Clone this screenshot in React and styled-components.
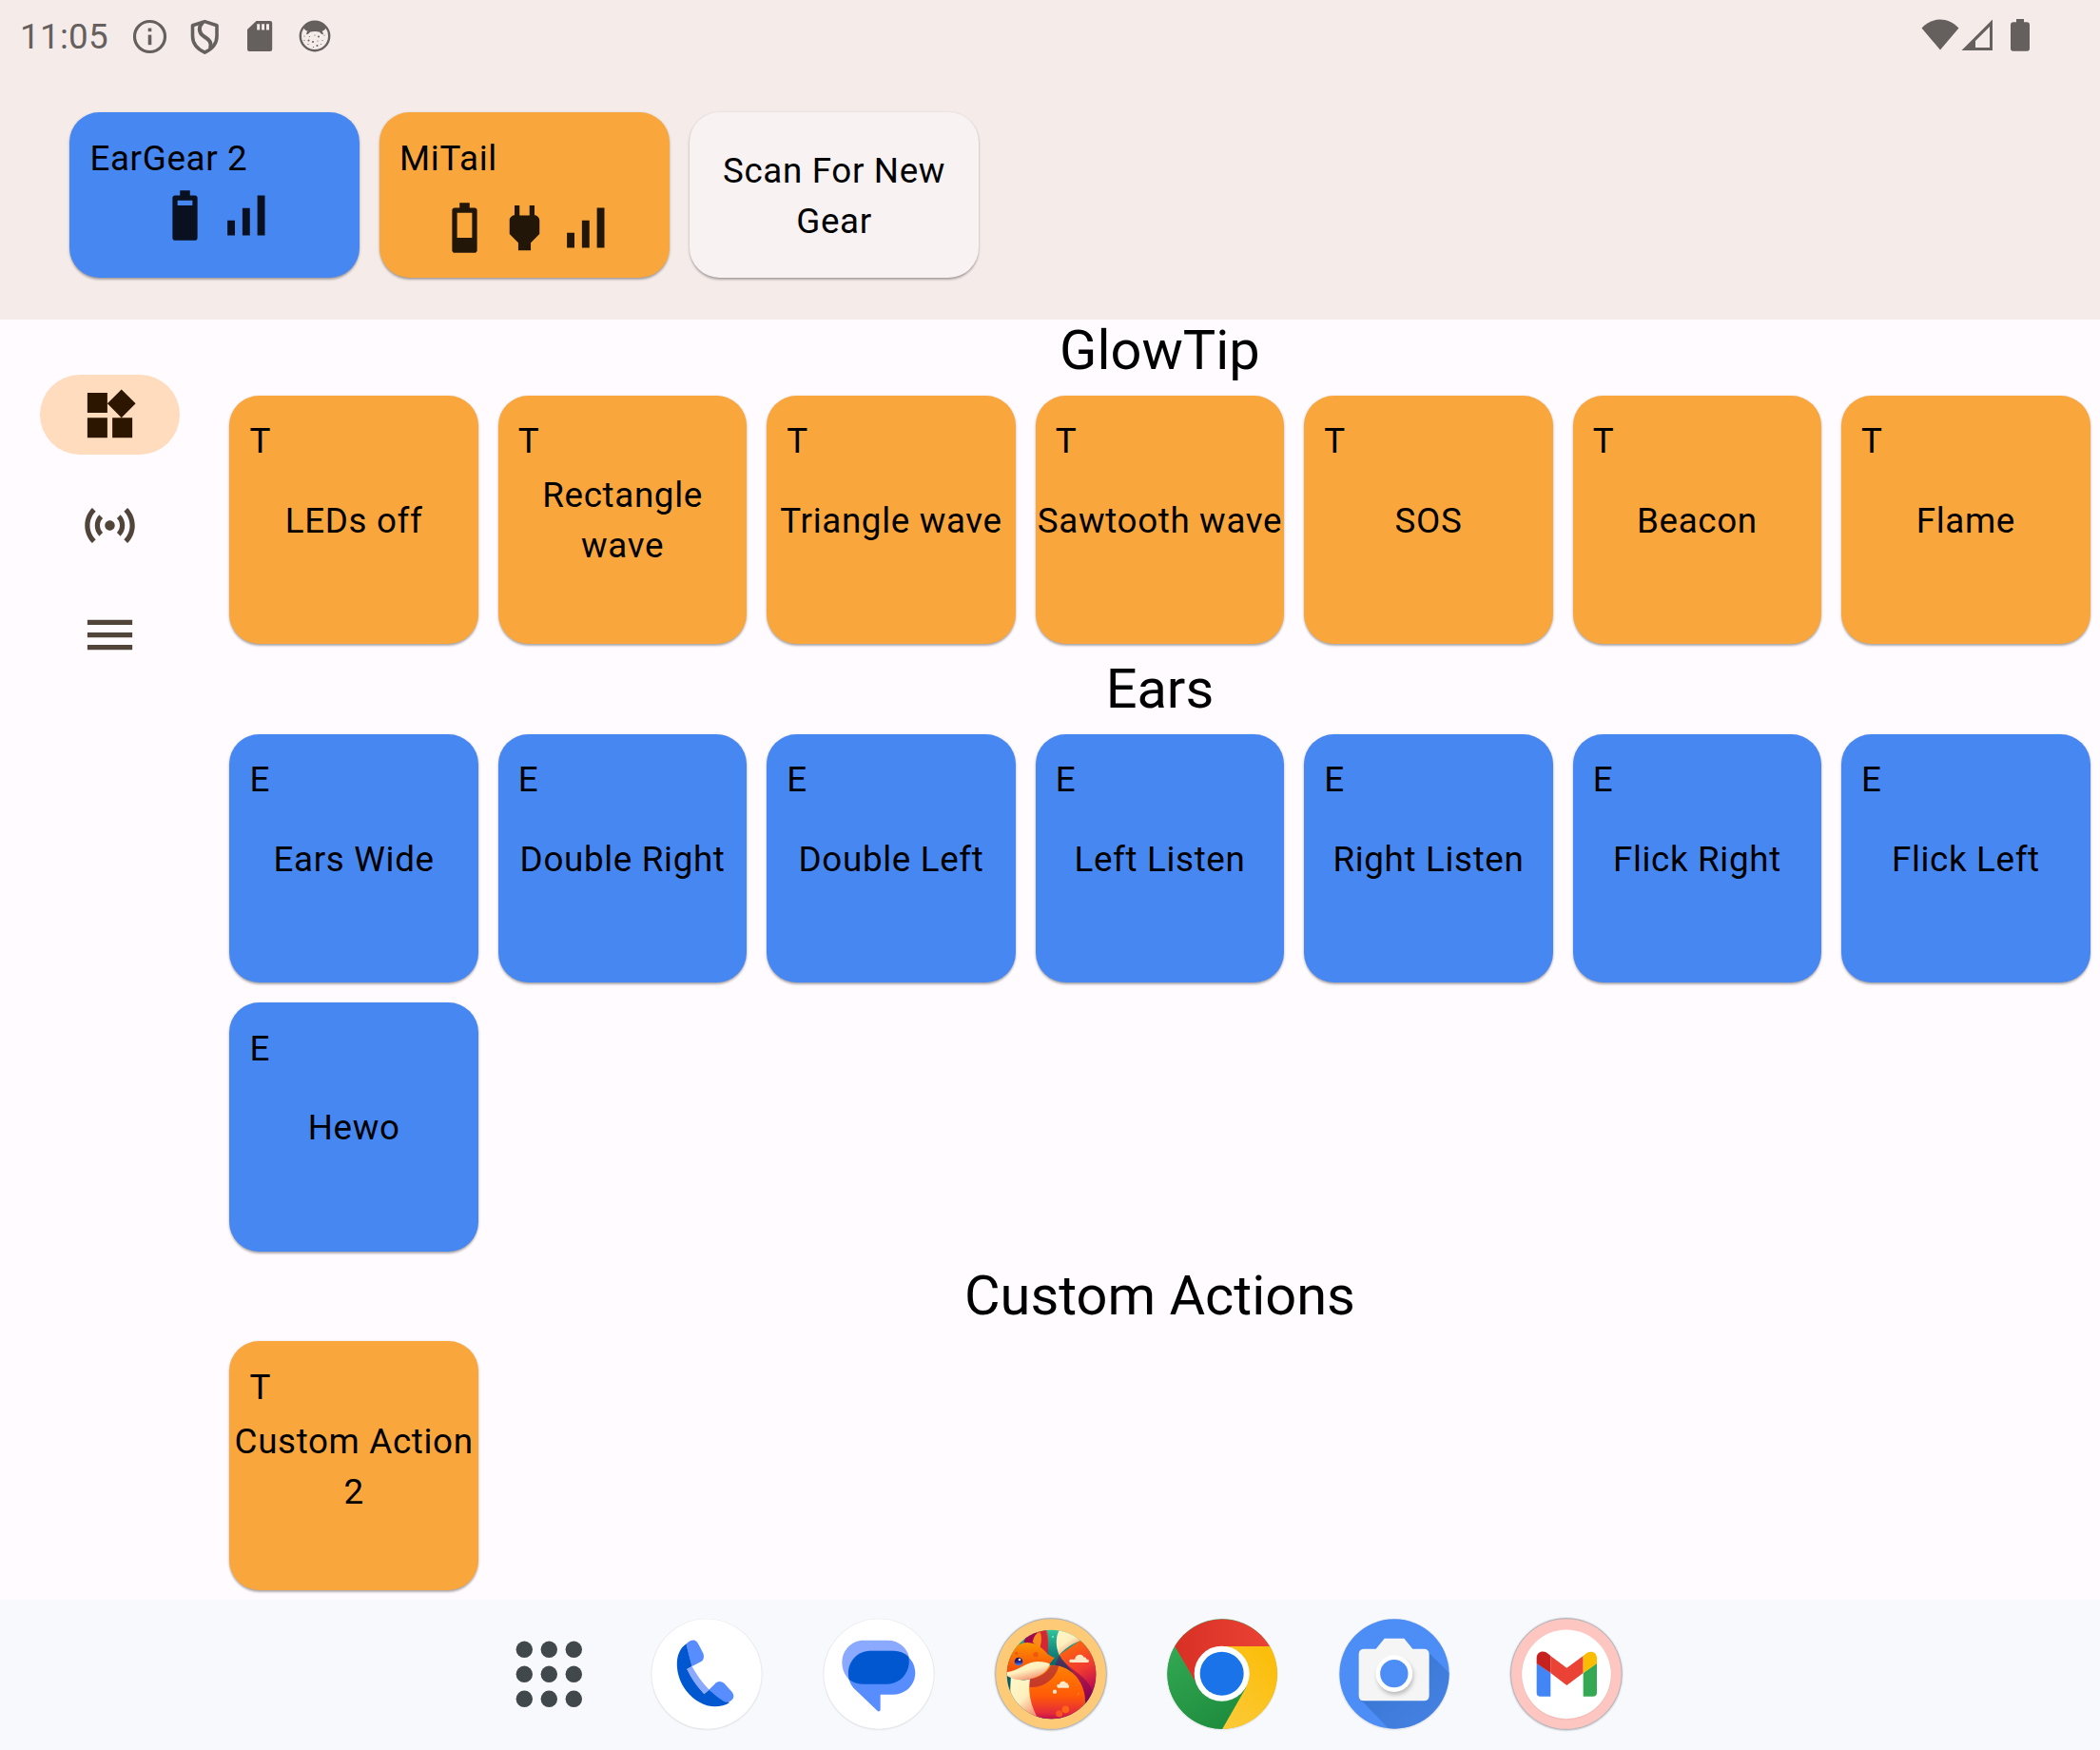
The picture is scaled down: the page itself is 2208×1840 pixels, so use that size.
import React from "react";
import styled, { createGlobalStyle } from "styled-components";

const ORANGE = "#f9a63d";
const BLUE = "#4787f1";

const GlobalStyle = createGlobalStyle`
  * { box-sizing: border-box; }
  html, body { margin: 0; padding: 0; background: #fffbff; }
  body { font-family: Roboto, "Noto Sans", sans-serif; color: #000; }
  svg { display: block; flex: none; }
`;

const Screen = styled.div`
  width: 2208px;
  height: 1840px;
  display: flex;
  flex-direction: column;
  overflow: hidden;
  background: #fffbff;
`;

const Header = styled.header`
  height: 336px;
  flex: none;
  background: #f5ecea;
  display: flex;
  flex-direction: column;
`;

const StatusBar = styled.div`
  height: 118px;
  flex: none;
  display: flex;
  justify-content: space-between;
  align-items: flex-start;
  padding: 17px 63.5px 0 21px;
  color: #655f5e;
`;

const StatusGroup = styled.div`
  display: flex;
  align-items: center;
  height: 42px;
`;

const Clock = styled.span`
  font-size: 36.75px;
  line-height: 42px;
  width: 116px;
  letter-spacing: 0.3px;
  padding-top: 2px;
`;

const StatusIcon = styled.svg`
  width: 42px;
  height: 42px;
  margin-right: ${(p) => p.$gap || 0}px;
  fill: currentColor;
`;

const GearRow = styled.div`
  display: flex;
  gap: 21.2px;
  padding-left: 73.4px;
`;

const Surface = styled.div`
  border-radius: 31.5px;
  background: ${(p) => p.$color};
  box-shadow: 0 2.6px 2.6px -1px rgba(0, 0, 0, 0.2), 0 1px 3px rgba(0, 0, 0, 0.24);
`;

const GearCard = styled(Surface)`
  width: 304.5px;
  height: 173.5px;
  display: flex;
  flex-direction: column;
  justify-content: ${(p) => (p.$centered ? "center" : "flex-start")};
  padding: ${(p) => (p.$centered ? "2px 21px 0" : "22px 0 0")};
`;

const bodyText = `
  font-size: 36.75px;
  line-height: 53px;
  letter-spacing: 0.66px;
`;

const GearName = styled.div`
  ${bodyText}
  padding-left: 21px;
`;

const GearLabel = styled.div`
  ${bodyText}
  text-align: center;
`;

const GearIcons = styled.div`
  display: flex;
  justify-content: center;
  margin-top: ${(p) => p.$offset}px;
  color: rgba(0, 0, 0, 0.87);
`;

const Glyph = styled.svg`
  width: 63px;
  height: 63px;
  fill: currentColor;
`;

const Main = styled.main`
  flex: 1;
  min-height: 0;
  display: flex;
`;

const Rail = styled.nav`
  width: 230.9px;
  flex: none;
  display: flex;
  flex-direction: column;
  align-items: center;
  gap: 31.7px;
  padding-top: 58.4px;
`;

const RailItem = styled.div`
  width: 147px;
  height: 84px;
  border-radius: 42px;
  display: flex;
  align-items: center;
  justify-content: center;
  background: ${(p) => (p.$active ? "#ffdcbe" : "transparent")};
  color: ${(p) => (p.$active ? "#2c1600" : "#51453a")};
`;

const Content = styled.div`
  flex: 1;
  min-width: 0;
`;

const SectionTitle = styled.h2`
  margin: 0;
  font-size: 57.75px;
  font-weight: 400;
  line-height: ${(p) => (p.$first ? 65 : 73.5)}px;
  padding-bottom: ${(p) => (p.$first ? 4.3 : 0)}px;
  text-align: center;
`;

const ActionGrid = styled.div`
  display: grid;
  grid-template-columns: repeat(7, 1fr);
`;

const ActionCell = styled.div`
  aspect-ratio: 1;
  padding: 10.5px;
  display: flex;
`;

const ActionCard = styled(Surface)`
  flex: 1;
  min-width: 0;
  display: grid;
  grid-template: 1fr / 1fr;
`;

const GearTag = styled.span`
  ${bodyText}
  grid-area: 1 / 1;
  padding: 21.7px 21px;
`;

const ActionLabel = styled.span`
  ${bodyText}
  grid-area: 1 / 1;
  align-self: center;
  text-align: center;
  padding-top: 1.4px;
`;

const Dock = styled.footer`
  height: 158px;
  flex: none;
  display: flex;
  align-items: flex-start;
  gap: 52.9px;
  padding: 14px 0 0 538px;
  background: #f8f9fd;
`;

const AllApps = styled.svg`
  width: 78px;
  height: 78px;
  margin: 25px 9.9px 0 0;
  fill: #41484b;
`;

const AppIcon = styled.svg`
  width: 128px;
  height: 128px;
`;

const PATHS = {
  batteryHigh:
    "M17 5v16c0 .55-.45 1-1 1H8c-.55 0-1-.45-1-1V5c0-.55.45-1 1-1h2V2h4v2h2c.55 0 1 .45 1 1zm-2 1H9v2h6V6z",
  batteryLow:
    "M17 5v16c0 .55-.45 1-1 1H8c-.55 0-1-.45-1-1V5c0-.55.45-1 1-1h2V2h4v2h2c.55 0 1 .45 1 1zm-2 1H9v10h6V6z",
  power:
    "M16.01 7L16 3h-2v4h-4V3H8v4h-.01C7 6.99 6 7.99 6 8.99v5.49L9.5 18v3h5v-3l3.5-3.51v-5.5c0-1-1-2-1.99-1.99z",
  signal: "M17 4h3v16h-3zM5 14h3v6H5zm6-5h3v11h-3z",
  widgets:
    "M13 13v8h8v-8h-8zM3 21h8v-8H3v8zM3 3v8h8V3H3zm13.66-1.31L11 7.34 16.66 13l5.66-5.66-5.66-5.65z",
  sensors:
    "M7.76 16.24C6.67 15.16 6 13.66 6 12s.67-3.16 1.76-4.24l1.42 1.42C8.45 9.9 8 10.9 8 12c0 1.1.45 2.1 1.17 2.83l-1.41 1.41zm8.48 0C17.33 15.16 18 13.66 18 12s-.67-3.16-1.76-4.24l-1.42 1.42C15.55 9.9 16 10.9 16 12c0 1.1-.45 2.1-1.17 2.83l1.41 1.41zM12 10c-1.1 0-2 .9-2 2s.9 2 2 2 2-.9 2-2-.9-2-2-2zm8 2c0 2.21-.9 4.21-2.35 5.65l1.42 1.42C20.88 17.26 22 14.76 22 12s-1.12-5.26-2.93-7.07l-1.42 1.42C19.1 7.79 20 9.79 20 12zM6.35 6.35L4.93 4.93C3.12 6.74 2 9.24 2 12s1.12 5.26 2.93 7.07l1.42-1.42C4.9 16.21 4 14.21 4 12s.9-4.21 2.35-5.65z",
  menu: "M3 18h18v-2H3v2zm0-5h18v-2H3v2zm0-7v2h18V6H3z",
};

const Icon = ({ name }) => (
  <Glyph viewBox="0 0 24 24">
    <path d={PATHS[name]} />
  </Glyph>
);

const StatusIcons = () => (
  <>
    <StatusIcon viewBox="0 0 42 42" $gap={16}>
      <circle cx="20.5" cy="21.5" r="16" fill="none" stroke="currentColor" strokeWidth="3.2" />
      <rect x="18.7" y="12.6" width="3.6" height="3.6" />
      <rect x="18.7" y="19.6" width="3.6" height="10.6" />
    </StatusIcon>
    <StatusIcon viewBox="0 0 42 42" $gap={16}>
      <path
        d="M20.3 5.6L33 9.8V21c0 8-6 14-12.7 17.2C13.5 35 7.5 29 7.5 21V9.8Z"
        fill="none"
        stroke="currentColor"
        strokeWidth="3.6"
        strokeLinejoin="round"
      />
      <path
        d="M18.5 6c-5 5-5 11 .5 15 6 4 9 6 7 13"
        fill="none"
        stroke="currentColor"
        strokeWidth="4"
      />
    </StatusIcon>
    <StatusIcon viewBox="0 0 42 42" $gap={16}>
      <path
        fillRule="evenodd"
        d="M16.5 5H31q2.200 0 2.200 2.200V34.800q0 2.200-2.200 2.200H9.200q-2.200 0-2.200-2.200V14ZM17.200 8.200v6.400h3V8.200Zm4.900 0v6.400h3V8.200Zm4.900 0v6.400h3V8.200Z"
      />
    </StatusIcon>
    <StatusIcon viewBox="0 0 42 42">
      <circle cx="20" cy="21" r="15.2" fill="none" stroke="currentColor" strokeWidth="2.4" />
      <path d="M8 12C14 3.500 26 3.500 32 12c-1 2-2.500 3.200-4.500 3.800 1 .8 1.300 2.200 1.300 3.400-1.700 0-2.700-.7-3.600-2.400-3-1-7.400-1-10.400 0-.9 1.700-1.900 2.400-3.600 2.400 0-1.200.3-2.600 1.300-3.400C10.500 15.200 9 14 8 12Z" />
      {[[9, 21], [14.5, 21.5], [24, 21.5], [30, 20], [9, 25.5], [13.5, 25.5], [20, 20], [23, 26], [18, 27], [28, 25.5], [13, 29.5], [22.5, 31], [26.5, 29.5], [18.5, 32.5]].map(
        ([x, y], i) => (
          <circle key={i} cx={x} cy={y} r={i % 3 === 2 ? 1 : 0.6} />
        )
      )}
    </StatusIcon>
  </>
);

const SystemIcons = () => (
  <>
    <StatusIcon viewBox="0 0 42 42">
      <path d="M1.5 12.5C13 .5 29 .5 40.5 12.5L21 35.5Z" />
    </StatusIcon>
    <StatusIcon viewBox="0 0 42 42">
      <path fillRule="evenodd" d="M1.5 36L34 3.5V36ZM16 26v7H31V11Z" />
    </StatusIcon>
    <StatusIcon viewBox="0 0 42 42">
      <path d="M17 3h8v3.200h3q3 0 3 3V34q0 2.700-2.700 2.700H13.700Q11 36.700 11 34V9.200q0-3 3-3h3Z" />
    </StatusIcon>
  </>
);

const Disc = ({ cx, cy, fill = "#fff" }) => (
  <>
    <circle cx={cx} cy={cy + 2} r="177" fill="#000" opacity="0.03" />
    <circle cx={cx} cy={cy + 1} r="175.5" fill="#000" opacity="0.04" />
    <circle cx={cx} cy={cy} r="173" fill={fill} />
  </>
);

const Ring = ({ cx, cy, fill }) => (
  <>
    <circle cx={cx} cy={cy + 1} r="181" fill="#000" opacity="0.05" />
    <circle cx={cx} cy={cy + 1} r="178" fill="#000" opacity="0.1" />
    <circle cx={cx} cy={cy} r="176" fill="#7b8088" opacity="0.4" />
    <circle cx={cx} cy={cy} r="173.5" fill={fill} />
  </>
);

const PhoneApp = () => (
  <AppIcon viewBox="536 79 384 384">
    <Disc cx={728} cy={271} />
    <path
      fill="#0057cf"
      d="M664 176C640 192 632 222 635 252C641 318 697 374 755 374C776 374 790 368 800 361L737 320L720 334C700 312 682 284 666 256L682 247Z"
    />
    <path
      fill="#588dff"
      d="M664 176C674 166 688 160 697 170Q703 178 718 208Q721 226 712 231L682 247Q668 205 664 176Z"
    />
    <path
      fill="#588dff"
      d="M735 321L758 299Q770 290 783 300L808 328Q816 338 811 349Q803 361 789 360Q775 357 735 321Z"
    />
    <path fill="#8baaff" d="M666 256L682 247Q702 286 736 321L720 334Q684 298 666 256Z" />
  </AppIcon>
);

const MessagesApp = () => (
  <AppIcon viewBox="1078 79 384 384">
    <Disc cx={1270} cy={271} />
    <path fill="#8baaff" d="M1222 165H1298C1333 165 1358 188 1365 216L1176 288C1162 275 1154 255 1154 234C1154 196 1184 165 1222 165Z" />
    <path
      fill="#588dff"
      d="M1243 198H1315C1354 198 1385 229 1385 267C1385 306 1354 336 1315 336H1275V384Q1274 391 1267 389L1190 315Q1173 295 1173 267C1173 229 1204 198 1243 198Z"
    />
    <path
      fill="#0057cf"
      d="M1243 198H1315Q1344 198 1364 217C1372 263 1340 303 1296 303H1222Q1195 303 1176 288C1165 240 1199 198 1243 198Z"
    />
  </AppIcon>
);

const FoxApp = () => (
  <AppIcon viewBox="0 18 384 384">
    <defs>
      <clipPath id="foxClip"><circle cx="193.5" cy="211.5" r="140.5" /></clipPath>
      <linearGradient id="foxTeal" x1="0" y1="0" x2="0" y2="1">
        <stop offset="0" stopColor="#2fc79c" /><stop offset="0.4" stopColor="#04626b" /><stop offset="1" stopColor="#044c63" />
      </linearGradient>
      <linearGradient id="foxTail" x1="0.3" y1="0" x2="0.6" y2="1">
        <stop offset="0" stopColor="#ff6a0c" /><stop offset="0.45" stopColor="#f03a30" /><stop offset="0.8" stopColor="#b80752" /><stop offset="1" stopColor="#62064d" />
      </linearGradient>
      <linearGradient id="foxBody" x1="0" y1="0" x2="0" y2="1">
        <stop offset="0" stopColor="#ff8200" /><stop offset="0.55" stopColor="#ff5a08" /><stop offset="0.85" stopColor="#e52a3b" /><stop offset="1" stopColor="#b00853" />
      </linearGradient>
      <linearGradient id="foxHead" x1="0" y1="0" x2="0" y2="1">
        <stop offset="0" stopColor="#fb9500" /><stop offset="1" stopColor="#f7420c" />
      </linearGradient>
      <linearGradient id="foxCream" x1="0" y1="0" x2="0.6" y2="1">
        <stop offset="0" stopColor="#fff8c8" /><stop offset="0.55" stopColor="#fff0be" /><stop offset="1" stopColor="#f3906f" />
      </linearGradient>
      <linearGradient id="foxBlue" x1="0" y1="0" x2="0" y2="1">
        <stop offset="0" stopColor="#170c52" /><stop offset="0.5" stopColor="#241c85" /><stop offset="1" stopColor="#3f92ff" />
      </linearGradient>
    </defs>
    <Ring cx={192} cy={210} fill="#fdcb78" />
    <g clipPath="url(#foxClip)">
      <rect x="50" y="68" width="290" height="290" fill="url(#foxTeal)" />
      <path fill="url(#foxTail)" d="M284 105C365 120 365 260 304 322C304 230 240 190 218 150Z" />
      <path fill="#7b0850" d="M218 150C240 200 330 215 330 300L298 310C300 240 240 210 205 184Z" opacity="0.55" />
      <path fill="url(#foxCream)" d="M220 68C206 94 206 120 218 151C235 130 260 114 285 105L270 68Z" />
      <path fill="#a3074c" d="M106 112C112 88 128 72 150 70L140 116Z" />
      <path fill="#e63822" d="M150 66H176C186 90 186 125 177 154L138 126Z" />
      <path fill="#f98b1d" d="M134 110C138 90 146 80 160 78C164 94 162 112 157 126Z" />
      <path fill="#c31744" d="M155 74C166 92 162 120 157 130L185 155C184 120 180 90 173 70Z" opacity="0.55" />
      <path fill="url(#foxBody)" d="M124 228C150 190 176 178 210 184C265 192 302 244 300 302L270 360H150C128 320 118 280 124 228Z" />
      <path fill="#8d094e" d="M124 226C160 222 182 204 192 183L216 184C212 216 176 256 124 252Z" opacity="0.5" />
      <path fill="url(#foxCream)" d="M66 216C90 230 110 232 126 226C118 270 130 318 157 360H90C60 310 62 270 66 216Z" />
      <path fill="url(#foxHead)" d="M52 196C54 140 80 112 118 111C150 112 166 130 182 148Q194 157 204 158Q194 170 184 184C160 164 126 172 52 212Z" />
      <path fill="url(#foxCream)" d="M48 205C84 204 112 172 150 171Q176 172 189 179C176 214 130 230 94 229C72 227 56 219 48 212Z" />
      <circle cx="90" cy="171" r="13" fill="url(#foxBlue)" />
      <circle cx="93" cy="165" r="4" fill="#fff7d5" />
      <circle cx="144" cy="149" r="8" fill="#ef580c" />
      <circle cx="83" cy="145" r="5" fill="#ef580c" />
      <g fill="#ffe7c8">
        <path d="M252 164H268C268 148 292 144 296 158C302 156 304 160 304 164H310Q314 169 310 174H252Q247 169 252 164Z" />
        <path d="M212 243H219C220 232 236 230 240 239C246 238 246 243 246 243Q252 248 248 254H214Q208 249 212 243Z" />
        <circle cx="204" cy="266" r="6.5" />
        <circle cx="101" cy="289" r="4.5" />
        <circle cx="198" cy="93" r="3" fill="#7df0c5" />
        <circle cx="278" cy="273" r="2.5" fill="#ff9448" />
      </g>
      <circle cx="238" cy="322" r="11.5" fill="#ff6417" />
      <circle cx="218" cy="335" r="10.5" fill="#f9561f" />
    </g>
  </AppIcon>
);

const ChromeApp = () => (
  <AppIcon viewBox="604 49 384 384">
    <defs>
      <linearGradient id="chRed" x1="0" x2="1"><stop offset="0" stopColor="#d93025" /><stop offset="1" stopColor="#ea4335" /></linearGradient>
      <linearGradient id="chGreen" x1="0" y1="0" x2="0.6" y2="1"><stop offset="0" stopColor="#34a853" /><stop offset="1" stopColor="#1e8e3e" /></linearGradient>
      <linearGradient id="chYellow" x1="1" y1="0" x2="0.3" y2="1"><stop offset="0" stopColor="#fbbc04" /><stop offset="1" stopColor="#fcc934" /></linearGradient>
    </defs>
    <Disc cx={796} cy={241} fill="#34a853" />
    <path fill="url(#chRed)" d="M646.4 154A174 174 0 0 1 946 154L796 250L722 284Z" />
    <path fill="url(#chYellow)" d="M796 154H946.7A174 174 0 0 1 796 415L871 284Z" />
    <path fill="url(#chGreen)" d="M796 415A174 174 0 0 1 646.4 154L721 284L796 327L871 284Z" />
    <circle cx="795" cy="240" r="87" fill="#fff" />
    <circle cx="795" cy="240" r="69" fill="#1a73e8" />
  </AppIcon>
);

const CameraApp = () => (
  <AppIcon viewBox="67 49 384 384">
    <defs>
      <clipPath id="camClip"><circle cx="259" cy="241" r="173" /></clipPath>
      <linearGradient id="camShade" x1="0.2" y1="0.2" x2="0.9" y2="0.9"><stop offset="0" stopColor="#245fae" stopOpacity="0.5" /><stop offset="1" stopColor="#3a6fc4" stopOpacity="0.35" /></linearGradient>
      <linearGradient id="camLens" x1="0" y1="0" x2="0.6" y2="0.8"><stop offset="0" stopColor="#bdbdbd" stopOpacity="0.7" /><stop offset="1" stopColor="#eee" stopOpacity="0" /></linearGradient>
      <filter id="camBlur"><feGaussianBlur stdDeviation="6" /></filter>
    </defs>
    <Disc cx={259} cy={241} fill="#4c8df6" />
    <path clipPath="url(#camClip)" fill="url(#camShade)" d="M362 168L460 266V440H266L153 322Z" />
    <path
      fill="#f5f5f5"
      d="M228 129H290L317 162H352Q369 162 369 179V309Q369 326 352 326H164Q147 326 147 309V179Q147 162 164 162H201Z"
    />
    <path fill="url(#camLens)" d="M300 200L369 268V309Q369 326 352 326H264L218 280Z" opacity="0.5" />
    <circle cx="262" cy="250" r="57" fill="#777" opacity="0.45" filter="url(#camBlur)" />
    <circle cx="258.5" cy="240" r="58" fill="#fff" />
    <circle cx="258.5" cy="240" r="44" fill="#4c8df6" />
  </AppIcon>
);

const GmailApp = () => (
  <AppIcon viewBox="610 48 384 384">
    <Ring cx={801.5} cy={240} fill="#fdc6c1" />
    <circle cx="802" cy="243" r="142" fill="#c98f8a" opacity="0.2" />
    <circle cx="802" cy="241" r="140.5" fill="#fff" />
    <path fill="#4285f4" d="M708 206L752 237V311H720Q708 311 708 299Z" />
    <path fill="#34a853" d="M855 237L898 206V299Q898 311 885 311H855Z" />
    <path fill="#ea4335" d="M752 183L803 221L855 183V237L803 276L752 237Z" />
    <path fill="#c5221f" d="M708 207V190C708 171 729 162 745 177L752 183V237Z" />
    <path fill="#fbbc04" d="M855 237V183L862 177C878 163 898 171 898 190V207Z" />
  </AppIcon>
);

const GEAR = [
  { name: "EarGear 2", color: BLUE, icons: ["batteryHigh", "signal"], offset: 2 },
  { name: "MiTail", color: ORANGE, icons: ["batteryLow", "power", "signal"], offset: 15 },
];

const SECTIONS = [
  {
    title: "GlowTip",
    tag: "T",
    color: ORANGE,
    actions: ["LEDs off", "Rectangle wave", "Triangle wave", "Sawtooth wave", "SOS", "Beacon", "Flame"],
  },
  {
    title: "Ears",
    tag: "E",
    color: BLUE,
    actions: ["Ears Wide", "Double Right", "Double Left", "Left Listen", "Right Listen", "Flick Right", "Flick Left", "Hewo"],
  },
  { title: "Custom Actions", tag: "T", color: ORANGE, actions: ["Custom Action 2"] },
];

const RAIL = ["widgets", "sensors", "menu"];
const GRID_DOTS = [0, 1, 2, 3, 4, 5, 6, 7, 8];

export default function App() {
  return (
    <Screen>
      <GlobalStyle />
      <Header>
        <StatusBar>
          <StatusGroup>
            <Clock>11:05</Clock>
            <StatusIcons />
          </StatusGroup>
          <StatusGroup>
            <SystemIcons />
          </StatusGroup>
        </StatusBar>
        <GearRow>
          {GEAR.map((g) => (
            <GearCard key={g.name} $color={g.color}>
              <GearName>{g.name}</GearName>
              <GearIcons $offset={g.offset}>
                {g.icons.map((n) => (
                  <Icon key={n} name={n} />
                ))}
              </GearIcons>
            </GearCard>
          ))}
          <GearCard $color="#f8f2f2" $centered>
            <GearLabel>Scan For New Gear</GearLabel>
          </GearCard>
        </GearRow>
      </Header>
      <Main>
        <Rail>
          {RAIL.map((n, i) => (
            <RailItem key={n} $active={i === 0}>
              <Icon name={n} />
            </RailItem>
          ))}
        </Rail>
        <Content>
          {SECTIONS.map((s, i) => (
            <section key={s.title}>
              <SectionTitle $first={i === 0}>{s.title}</SectionTitle>
              <ActionGrid>
                {s.actions.map((a) => (
                  <ActionCell key={a}>
                    <ActionCard $color={s.color}>
                      <GearTag>{s.tag}</GearTag>
                      <ActionLabel>{a}</ActionLabel>
                    </ActionCard>
                  </ActionCell>
                ))}
              </ActionGrid>
            </section>
          ))}
        </Content>
      </Main>
      <Dock>
        <AllApps viewBox="0 0 78 78">
          {GRID_DOTS.map((i) => (
            <circle key={i} cx={13.3 + (i % 3) * 26} cy={13.3 + Math.floor(i / 3) * 26} r="8.7" />
          ))}
        </AllApps>
        <PhoneApp />
        <MessagesApp />
        <FoxApp />
        <ChromeApp />
        <CameraApp />
        <GmailApp />
      </Dock>
    </Screen>
  );
}
